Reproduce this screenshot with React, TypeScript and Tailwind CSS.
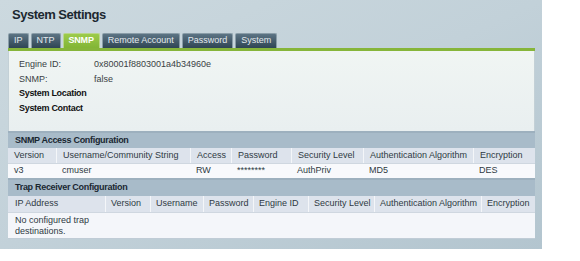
import React from "react";

const tabs = ["IP", "NTP", "SNMP", "Remote Account", "Password", "System"];

const t1Cols = [48, 134, 41, 60, 72, 110, 62];
const t1Head = ["Version", "Username/Community String", "Access", "Password", "Security Level", "Authentication Algorithm", "Encryption"];
const t1Row = ["v3", "cmuser", "RW", "********", "AuthPriv", "MD5", "DES"];

const t2Cols = [97, 45, 53, 50, 55, 66, 107, 54];
const t2Head = ["IP Address", "Version", "Username", "Password", "Engine ID", "Security Level", "Authentication Algorithm", "Encryption"];

export default function App() {
  return (
    <div className="w-[580px] h-[261px] bg-white font-['Liberation_Sans',Arial,sans-serif] overflow-hidden">
      <div className="w-[542px] h-[249px] bg-gradient-to-br from-[#ccd9df] via-[#c2d1d9] to-[#b3c5cf] pt-[8px] pl-[8px]">
        <div className="pl-[4px] text-[13px] leading-[14px] font-bold tracking-[-0.5px] text-[#1c2830]">
          System Settings
        </div>
        <div className="flex gap-[2px] mt-[11px] h-[15px]">
          {tabs.map((t) =>
            t === "SNMP" ? (
              <div
                key={t}
                className="h-[15px] px-[5px] flex items-center rounded-t-[2px] border border-b-0 border-[#b9d68a] bg-gradient-to-b from-[#9ccb4a] to-[#82b535] text-white text-[9px] font-bold tracking-[-0.2px]"
              >
                {t}
              </div>
            ) : (
              <div
                key={t}
                className="h-[15px] px-[5px] flex items-center rounded-t-[2px] border border-b-0 border-[#8a9da8] bg-gradient-to-b from-[#5c7484] to-[#2f4554] text-[#e4eaee] text-[9px]"
              >
                {t}
              </div>
            )
          )}
        </div>
        <div className="w-[527px] h-[3px] bg-[#86b53a]" />
        <div className="w-[527px]">
          <div className="h-[80px] pt-[6px] pl-[10px] bg-gradient-to-b from-[#f0f5f3] to-[#e9eff0] border-l border-r border-[#c3d0d6] text-[9px] leading-[14.5px]">
            <div className="grid grid-cols-[75px_1fr] text-[#3a3f44]">
              <div>Engine ID:</div>
              <div>0x80001f8803001a4b34960e</div>
              <div>SNMP:</div>
              <div>false</div>
            </div>
            <div className="font-bold text-[#111] tracking-[-0.3px]">System Location</div>
            <div className="font-bold text-[#111] tracking-[-0.3px]">System Contact</div>
          </div>
          <div className="h-[2px] bg-[#9db0be]" />
          <div className="h-[15px] flex items-center pl-[7px] bg-[#a8bbc9] text-[9px] font-bold tracking-[-0.3px] text-[#1a2731]">
            SNMP Access Configuration
          </div>
          <div className="flex h-[15px] bg-[#dde3ec] text-[9px] text-[#2f3a43]">
            {t1Head.map((h, i) => (
              <div
                key={h}
                style={{ width: t1Cols[i] }}
                className={`flex items-center pl-[6px] whitespace-nowrap ${i > 0 ? "border-l border-[#f4f6f9]" : ""}`}
              >
                {h}
              </div>
            ))}
          </div>
          <div className="flex h-[15px] bg-[#f8f9fc] text-[9px] text-[#2f3a43] border-t border-[#cfd7e0]">
            {t1Row.map((h, i) => (
              <div key={i} style={{ width: t1Cols[i] }} className="flex items-center pl-[6px] whitespace-nowrap">
                {h}
              </div>
            ))}
          </div>
          <div className="h-[2px] bg-[#9db0be]" />
          <div className="h-[16px] flex items-center pl-[7px] bg-[#a8bbc9] text-[9px] font-bold tracking-[-0.3px] text-[#1a2731]">
            Trap Receiver Configuration
          </div>
          <div className="flex h-[16px] bg-[#dde3ec] text-[9px] text-[#2f3a43]">
            {t2Head.map((h, i) => (
              <div
                key={h}
                style={{ width: t2Cols[i] }}
                className={`flex items-center whitespace-nowrap ${i > 0 ? "pl-[5px] border-l border-[#f4f6f9]" : "pl-[7px]"}`}
              >
                {h}
              </div>
            ))}
          </div>
          <div className="flex h-[27px] bg-[#f4f6fa] text-[9px] leading-[11px] text-[#2f3a43] border-t border-[#cfd7e0] border-b border-b-[#c0ccd6]">
            <div style={{ width: t2Cols[0] }} className="pl-[7px] pt-[2px] pr-[4px]">
              No configured trap destinations.
            </div>
          </div>
        </div>
      </div>
    </div>
  );
}
